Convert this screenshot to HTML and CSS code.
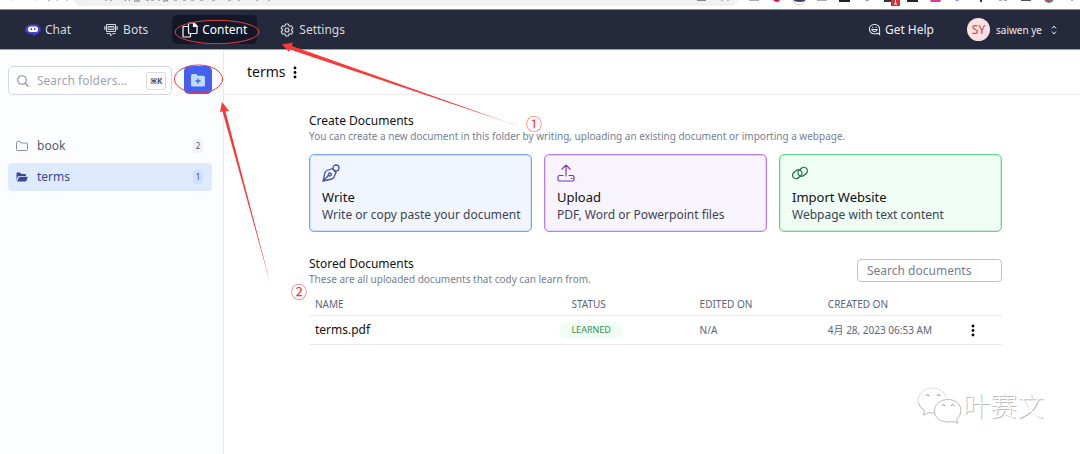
FILE: index.html
```html
<!DOCTYPE html>
<html lang="en">
<head>
<meta charset="utf-8">
<meta name="viewport" content="width=device-width, initial-scale=1">
<title>terms</title>
<link rel="stylesheet" href="styles.css">
</head>
<body>
<div class="browser-strip" aria-hidden="true">
  <svg class="strip-art" width="1080" height="9" viewBox="0 0 1080 9">
    <path d="M74 0Q76 6 82 6H729Q736 6 738 0Z" fill="#f0f1f3"/>
    <path d="M12 0h1M35 0h1M48 0l2 1M57 0v1M66 0h2" stroke="#aaa"/>
    <path d="M106 0v1M111 0v1M125 1l2-3M129 1l2-3M134 1h6M146 0h3M151 0h3M158 0h2M163 1h4l2-2M174 0h3M183 0h3M191 0h3M200 0h3M212 0h3M228 0h3M238 0h2M256 0h2M269 0v1" stroke="#777" fill="none"/>
    <path d="M697 .5h9M722 0v1M728 0v1" stroke="#888"/>
    <path d="M749 .5h10M817 .5h10M865 .5h4" stroke="#aaa"/>
    <path d="M773 0h7q-1 2-3 2t-4-2z" fill="#e0113f"/>
    <circle cx="799" cy="-2" r="7" fill="#fff" stroke="#ccc"/>
    <path d="M794 0h11v1q-5 2-11 0z" fill="#3d4759"/>
    <path d="M839 0h11v2h-11zM907 0h11v2h-11z" fill="#222"/>
    <path d="M884 0h7v2h-7z" fill="#333"/><path d="M891 0h9v6h-9z" fill="#d92f35"/>
    <path d="M895.500 0v4M894 4h3" stroke="#fff"/>
    <path d="M930 0h11l-1 2h-9z" fill="#dc3b8c"/>
    <path d="M955 0l4 1" stroke="#a58bd0"/><path d="M981 0v2" stroke="#235" stroke-width="2"/>
    <path d="M999 0h3M1004 0h3M1021 .5h10" stroke="#555"/><circle cx="1049" cy="-2" r="5" fill="#528a9c"/><path d="M1046 0h5v2h-5z" fill="#a6584a"/><path d="M1072 0v1" stroke="#555"/>
  </svg>
</div>

<header class="topbar">
  <nav class="nav">
    <a class="nav-link" href="#">
      <svg class="icon" viewBox="0 0 16 16"><path d="M5 2.500h6a4 4 0 0 1 3.500 2.500h1v5h-1A4 4 0 0 1 11 12l-2.500 2.500L8 12H5a4 4 0 0 1-3.500-2H.5V5h1A4 4 0 0 1 5 2.500z" fill="#4742df"/><rect x="3" y="4.500" width="10" height="5.500" rx="2.500" fill="#fff"/><path d="M6.300 6v2M9.700 6v2" stroke="#4742df" stroke-width="1.300"/></svg>Chat</a>
    <a class="nav-link" href="#">
      <svg class="icon" viewBox="0 0 16 16" fill="none" stroke="currentColor"><path d="M3.500 2.500h9v7h-9zM2 4v4M14 4v4M1 6h1M14 6h1M3.500 11.500h4v2.500l2.500-2.500h2.500"/><path d="M5 4.500h6v3H5z"/><path d="M7 4.500v2M9 4.500v2"/></svg>Bots</a>
    <a class="nav-link nav-link-active" href="#" aria-current="page">
      <svg class="icon" viewBox="0 0 16 16" fill="none" stroke="currentColor" stroke-width="1.200"><path d="M7 1h5l3 3v6.500q0 1-1 1H7.500q-1 0-1-1V2q0-1 1-1zM6.500 4.500H2q-1 0-1 1V14q0 1 1 1h5.500q1 0 1-1v-2.500"/><path d="M11.500 1v3.500H15L12 1z" fill="currentColor"/></svg>Content</a>
    <a class="nav-link" href="#">
      <svg class="icon" viewBox="0 0 24 24" fill="none" stroke="currentColor" stroke-width="1.700" stroke-linejoin="round"><path d="M9.594 3.940c.09-.542.56-.94 1.110-.94h2.593c.55 0 1.020.398 1.110.94l.213 1.281c.063.374.313.686.645.87.074.04.147.083.22.127.324.196.72.257 1.075.124l1.217-.456a1.125 1.125 0 0 1 1.370.49l1.296 2.247a1.125 1.125 0 0 1-.26 1.431l-1.003.827c-.293.24-.438.613-.431.992a6.759 6.759 0 0 1 0 .255c-.007.378.138.75.43.990l1.005.828c.424.35.534.954.26 1.430l-1.298 2.247a1.125 1.125 0 0 1-1.369.491l-1.217-.456c-.355-.133-.75-.072-1.076.124a6.570 6.570 0 0 1-.22.128c-.331.183-.581.495-.644.869l-.213 1.280c-.09.543-.56.941-1.110.941h-2.594c-.55 0-1.020-.398-1.110-.940l-.213-1.281c-.062-.374-.312-.686-.644-.870a6.520 6.520 0 0 1-.22-.127c-.325-.196-.72-.257-1.076-.124l-1.217.456a1.125 1.125 0 0 1-1.369-.490l-1.297-2.247a1.125 1.125 0 0 1 .26-1.431l1.004-.827c.292-.240.437-.613.430-.992a6.932 6.932 0 0 1 0-.255c.007-.378-.138-.750-.430-.990l-1.004-.828a1.125 1.125 0 0 1-.260-1.430l1.297-2.247a1.125 1.125 0 0 1 1.370-.491l1.216.456c.356.133.751.072 1.076-.124.072-.044.146-.087.220-.128.332-.183.582-.495.644-.869l.214-1.281Z"/><circle cx="12" cy="12" r="3"/></svg>Settings</a>
  </nav>
  <a class="help" href="#">
    <svg class="icon-small" viewBox="0 0 14 14" fill="none" stroke="currentColor" stroke-width="1.100"><path d="M9.500 11.500H6.500A5 5 0 1 1 6.500 1.500h1A5 5 0 0 1 12.500 7v5.500l-2-1.500z"/><path d="M4 7q3 4.500 6 0z"/><path d="M5.200 4v1.500M8.800 4v1.500"/></svg>Get Help</a>
  <button class="account" type="button">
    <span class="avatar">SY</span><span class="account-name">saiwen ye</span>
    <svg width="8" height="10" viewBox="0 0 8 10" fill="none" stroke="currentColor"><path d="M2 3.500L4 1l2 2.500M2 6.500L4 9l2-2.500"/></svg>
  </button>
</header>

<div class="workspace">
  <aside class="sidebar">
    <div class="folder-tools">
      <div class="folder-search">
        <svg class="search-icon" viewBox="0 0 12 12" fill="none" stroke="currentColor" stroke-width="1.100"><circle cx="5" cy="5" r="4.300"/><path d="M8 8l3.500 3.500"/></svg>
        <input class="folder-input" type="text" placeholder="Search folders..." aria-label="Search folders">
        <kbd class="shortcut">⌘K</kbd>
      </div>
      <button class="add-folder" type="button" aria-label="New folder">
        <svg width="16" height="16" viewBox="0 0 16 16"><path d="M1 3.500Q1 2 2.500 2h3.500l2 1.800h5.500q1.500 0 1.500 1.500V13q0 1.500-1.500 1.500h-11Q1 14.500 1 13z" fill="#bfdbfe"/><path d="M8 6.500v5M5.500 9h5" stroke="#4361ee" stroke-width="1.300"/></svg>
      </button>
    </div>
    <nav class="folders">
      <a class="folder" href="#">
        <svg class="folder-icon" viewBox="0 0 12 12" fill="none" stroke="#8590a6"><path d="M.5 2.500q0-1 1-1h2.500l1 1.500h5.500q1 0 1 1v5.500q0 1-1 1h-9q-1 0-1-1z"/></svg>
        <span class="folder-name">book</span><span class="count">2</span></a>
      <a class="folder folder-active" href="#" aria-current="true">
        <svg class="folder-icon" viewBox="0 0 12 12" fill="#3c4799"><path d="M.5 9.500V2.500q0-1 1-1H4L5.500 3H9q1 0 1 1v1H3q-1 0-1.300 1z"/><path d="M3.300 5.700h8.500L10.500 9.500q-.3 1-1.300 1H1z"/></svg>
        <span class="folder-name">terms</span><span class="count">1</span></a>
    </nav>
  </aside>

  <main class="main">
    <div class="title-row">
      <h1 class="title">terms</h1>
      <button class="dots" type="button" aria-label="Folder options"><svg width="4" height="14" viewBox="0 0 4 14"><circle cx="2" cy="3" r="1.400"/><circle cx="2" cy="7.500" r="1.400"/><circle cx="2" cy="12" r="1.400"/></svg></button>
    </div>
    <div class="content">
      <section>
        <h2 class="heading">Create Documents</h2>
        <p class="hint">You can create a new document in this folder by writing, uploading an existing document or importing a webpage.</p>
        <div class="cards">
          <button class="card card-write" type="button">
            <svg class="card-icon" viewBox="0 0 18 18" fill="none" stroke="#4350b5" stroke-width="1.300" stroke-linejoin="round"><path d="M1 17L3 8.500Q3.500 7 5 6.500l5.500-2 3.500 4-2 4.500q-.5 1.500-2 2zM1 17l5-5"/><circle cx="14" cy="4" r="3"/><path d="M6 11.500l1-2.500 2 .5.5 1.500-1.500 1z"/></svg>
            <span class="card-title">Write</span><span class="card-text">Write or copy paste your document</span></button>
          <button class="card card-upload" type="button">
            <svg class="card-icon" viewBox="0 0 18 18" fill="none" stroke="#7b36b8" stroke-width="1.200"><path d="M9 12.500V1M4.500 5.500L9 1l4.500 4.500M6.500 11.500H2.500q-1.500 0-1.500 1.500v2.500Q1 17 2.500 17h13q1.500 0 1.500-1.500V13q0-1.500-1.500-1.500h-4M14 14.500h1.500"/></svg>
            <span class="card-title">Upload</span><span class="card-text">PDF, Word or Powerpoint files</span></button>
          <button class="card card-import" type="button">
            <svg class="card-icon" viewBox="0 0 18 18" fill="none" stroke="#28724d" stroke-width="1.300"><rect x="-5" y="-3.500" width="10" height="7" rx="3.500" transform="translate(5.300 10.200) rotate(-38)"/><rect x="-5" y="-3.500" width="10" height="7" rx="3.500" transform="translate(10.700 7.800) rotate(-38)"/></svg>
            <span class="card-title">Import Website</span><span class="card-text">Webpage with text content</span></button>
        </div>
      </section>

      <section>
        <div class="stored-head">
          <div>
            <h2 class="heading">Stored Documents</h2>
            <p class="hint">These are all uploaded documents that cody can learn from.</p>
          </div>
          <input class="doc-search" type="text" placeholder="Search documents" aria-label="Search documents">
        </div>
        <table class="docs">
          <thead><tr><th class="col-name">NAME</th><th class="col">STATUS</th><th class="col">EDITED ON</th><th class="col">CREATED ON</th><th></th></tr></thead>
          <tbody><tr>
            <td class="doc-name">terms.pdf</td>
            <td><span class="badge">LEARNED</span></td>
            <td>N/A</td>
            <td class="date">4月 28, 2023 06:53 AM</td>
            <td class="actions"><button class="dots" type="button" aria-label="Document options"><svg width="4" height="14" viewBox="0 0 4 14"><circle cx="2" cy="3" r="1.400"/><circle cx="2" cy="7.500" r="1.400"/><circle cx="2" cy="12" r="1.400"/></svg></button></td>
          </tr></tbody>
        </table>
      </section>
    </div>
  </main>
</div>

<svg class="markup" width="560" height="310" viewBox="0 0 560 310" fill="none" stroke="#e83b40" aria-hidden="true">
  <ellipse cx="217" cy="32" rx="42" ry="11.700"/>
  <ellipse cx="198.500" cy="79" rx="24" ry="14"/>
  <path d="M282 44.500L293 42.500L292 46L518 126L290 49.500L289 52Z" fill="#f93838" stroke="none"/>
  <path d="M222 102L229 111L225.500 111.500L271 286L222.500 111.500L220 112Z" fill="#f93838" stroke="none"/>
</svg>
<span class="step step-one">①</span>
<span class="step step-two">②</span>

<div class="watermark">
  <svg width="46" height="38" viewBox="0 0 46 38" fill="#fff" stroke="#bbb" stroke-linejoin="round"><path d="M21 26q-4 1.500-9 .3L6.500 29l1-4.500Q1 20.500 1 14.500C1 7.500 7.500 2 15 2s13 4 14.500 10" stroke="#ddd"/><path d="M1.500 17Q2.500 21 7.500 24.500l-1 4.500 5.500-2.500q4 1 7 .3"/><path d="M44 24.500c0-6.500-6-11-13-11s-13.500 4.500-13.500 11.500S23.500 36 31 36q3 0 5-.7l4.500 2-1-4q4.500-3.800 4.500-8.800z"/><path d="M9 10q1.500-3 3.500 0M20 10q1.500-3 3.500 0M25 20q1.500-3 3.500 0M34 20q1.500-3 3.500 0" stroke="#888"/></svg>
  <span class="watermark-name">叶赛文</span>
</div>
</body>
</html>
```

FILE: styles.css
```css
* { box-sizing: border-box; }
body {
  margin: 0;
  min-height: 100vh;
  display: flex;
  flex-direction: column;
  position: relative;
  background: #fff;
  color: #111;
  font-family: "Noto Sans", "Noto Sans CJK SC", sans-serif;
  font-size: 12px;
  line-height: 16px;
}
button, input { font: inherit; color: inherit; }
button { border: 0; background: none; padding: 0; cursor: pointer; }
a { color: inherit; text-decoration: none; }
h1, h2, p { margin: 0; font-weight: 400; }

.browser-strip { height: 9px; overflow: hidden; }
.strip-art { display: block; }

.topbar {
  display: flex;
  align-items: center;
  height: 41px;
  padding: 0 22px 0 17px;
  border-top: 1px solid #858a96;
  border-bottom: 1px solid #9da1ac;
  background: #24293b;
  color: #d5d8df;
}
.nav { display: flex; gap: 14px; margin-right: auto; }
.nav-link {
  display: flex;
  align-items: center;
  gap: 4px;
  height: 29px;
  padding: 0 10px 0 8px;
  border-radius: 5px;
}
.nav-link-active { padding: 0 10px; background: #131829; color: #fff; }
.icon { width: 16px; height: 16px; }
.icon-small { width: 13px; height: 13px; }
.help { display: flex; align-items: center; gap: 4px; margin-right: 33px; color: #eceef2; }
.account { display: flex; align-items: center; gap: 6px; color: #eceef2; }
.avatar {
  width: 23px;
  height: 23px;
  border-radius: 50%;
  background: #fbe1e2;
  color: #d63c43;
  line-height: 23px;
  text-align: center;
}
.account-name { font-size: 10px; margin-right: 2px; }

.workspace { display: flex; flex: 1; }
.sidebar {
  width: 224px;
  flex: none;
  padding: 16px 11px 0 8px;
  border-right: 1px solid #e7e9ee;
  background: #fcfdff;
}
.folder-tools { display: flex; justify-content: space-between; }
.folder-search {
  display: flex;
  align-items: center;
  gap: 8px;
  width: 164px;
  height: 29px;
  padding: 0 5px 0 8px;
  border: 1px solid #d4d6df;
  border-radius: 5px;
  background: #fff;
}
.search-icon { width: 12px; height: 12px; flex: none; color: #858a98; }
.folder-input { flex: 1; min-width: 0; padding: 0; border: 0; background: none; }
.folder-input::placeholder { color: #a0a4b1; opacity: 1; }
.shortcut {
  width: 20px;
  height: 18px;
  border: 1px solid #d9dce3;
  border-radius: 3px;
  color: #4b5162;
  font: 700 8px/16px "Noto Sans", "DejaVu Sans", sans-serif;
  text-align: center;
  white-space: nowrap;
}
.add-folder {
  display: grid;
  place-items: center;
  width: 28px;
  height: 28px;
  border-radius: 5px;
  background: #4361ee;
}
.folders { display: grid; gap: 3px; margin-top: 37px; }
.folder {
  display: flex;
  align-items: center;
  gap: 9px;
  height: 28px;
  padding: 0 9px 0 8px;
  border-radius: 4px;
  color: #535b6b;
}
.folder-active { background: #deeafe; color: #3c4799; }
.folder-icon { width: 12px; height: 12px; }
.folder-name { flex: 1; }
.count {
  width: 10px;
  height: 14px;
  border-radius: 3px;
  background: #f0f2f8;
  font-size: 8px;
  line-height: 14px;
  text-align: center;
}
.folder-active .count { background: #cfe0fd; }

.main { flex: 1; min-width: 0; }
.title-row {
  display: flex;
  align-items: center;
  gap: 7px;
  height: 45px;
  padding-left: 23px;
  border-bottom: 1px solid #ebebed;
}
.title { font-size: 14px; line-height: 20px; }
.dots { display: flex; }
.content { display: grid; gap: 24px; padding: 18px 78px 0 85px; }
.heading { font-size: 12px; line-height: 16px; }
.hint { color: #738095; font-size: 10px; line-height: 14px; }
.cards { display: grid; grid-template-columns: repeat(3, minmax(0, 1fr)); gap: 12px; margin-top: 11px; }
.card {
  display: flex;
  flex-direction: column;
  align-items: flex-start;
  min-height: 78px;
  padding: 9px 8px 7px 12px;
  border: 1px solid;
  border-radius: 5px;
  line-height: 18px;
  text-align: left;
}
.card-icon { flex: none; width: 18px; height: 18px; margin-bottom: 6px; }
.card-title { font-size: 13px; }
.card-text { color: #3c4354; white-space: nowrap; }
.card-write { border-color: #76a5f5; background: #f1f6fe; box-shadow: inset 0 0 0 1px #cfe0fc; }
.card-upload { border-color: #b67bf5; background: #f8f4fe; box-shadow: inset 0 0 0 1px #e6d2fc; }
.card-import { border-color: #63d394; background: #effdf4; box-shadow: inset 0 0 0 1px #c6f2d8; }

.stored-head { display: flex; justify-content: space-between; align-items: flex-start; }
.doc-search {
  width: 145px;
  height: 23px;
  margin-top: 3px;
  padding: 0 9px;
  border: 1px solid #bac2d4;
  border-radius: 4px;
  background: #fff;
}
.doc-search::placeholder { color: #777e8c; opacity: 1; }
.docs { width: 100%; margin-top: 8px; border-collapse: collapse; table-layout: fixed; }
.docs th, .docs td {
  padding: 0 6px;
  border-bottom: 1px solid #e9e9eb;
  color: #5b6579;
  font-size: 10px;
  font-weight: 400;
  text-align: left;
}
.docs th { height: 21px; }
.docs td { height: 29px; }
.docs .col-name { width: 37%; }
.docs .col { width: 18.5%; }
.docs .doc-name { color: #111; font-size: 12px; }
.docs .date { white-space: nowrap; }
.docs .actions { padding-left: 21px; }
.badge {
  display: inline-block;
  margin-left: -12px;
  padding: 0 12px;
  border-radius: 8px;
  background: #effdf3;
  color: #43874f;
  font-size: 9px;
  line-height: 16px;
}

.markup { position: absolute; top: 0; left: 0; pointer-events: none; }
.step {
  position: absolute;
  color: #f43b3b;
  font: 16px/16px "Noto Sans CJK SC", sans-serif;
}
.step-one { left: 526px; top: 115px; }
.step-two { left: 291px; top: 283px; }
.watermark {
  position: absolute;
  right: 36px;
  bottom: 30px;
  display: flex;
  align-items: center;
}
.watermark-name {
  color: #fff;
  font: 300 27px/36px "Noto Sans CJK SC", sans-serif;
  text-shadow: 1px 1px 0 #bbb;
}
```
